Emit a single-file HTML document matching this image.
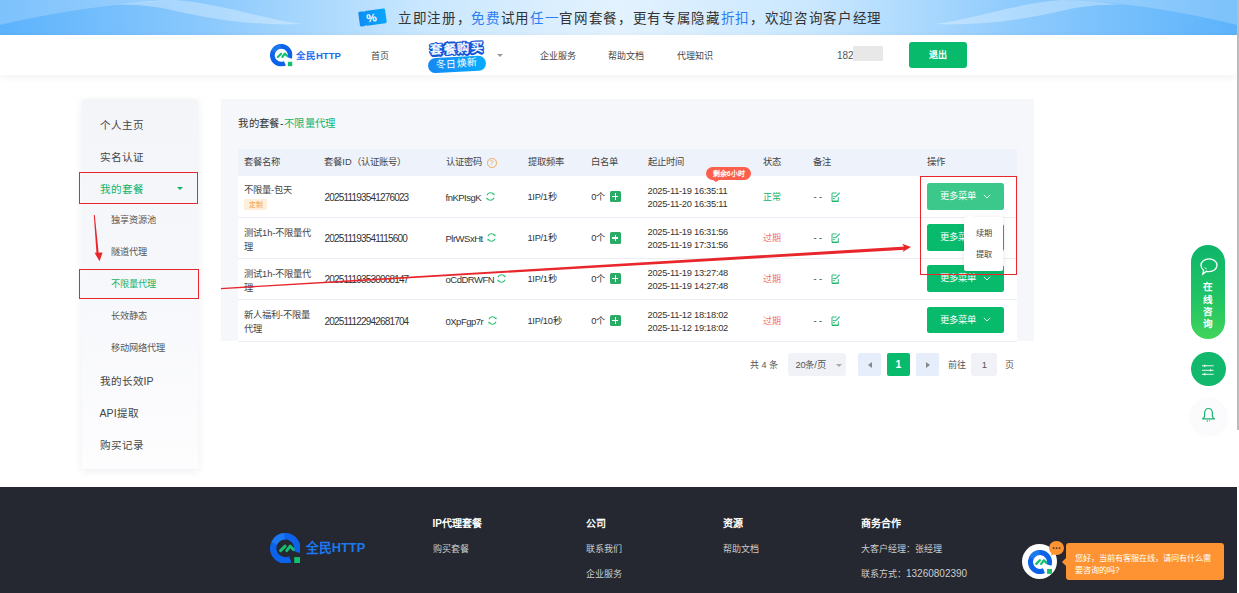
<!DOCTYPE html>
<html lang="zh-CN"><head><meta charset="utf-8">
<style>
*{margin:0;padding:0;box-sizing:border-box}
html,body{width:1239px;height:593px;overflow:hidden;background:#fff}
body{position:relative;font-family:"Liberation Sans",sans-serif;color:#333}
.a{position:absolute;white-space:nowrap;line-height:1}
#banner{left:0;top:0;width:1237px;height:35px;background:#c9e7fe;overflow:hidden}
#nav{left:0;top:35px;width:1237px;height:40px;background:#fff;box-shadow:0 2px 8px rgba(0,0,0,0.06)}
.side{left:82px;top:99px;width:116px;height:370px;background:linear-gradient(180deg,#f3f5f9 0%,#f6f7fb 45%,#fdfdfe 100%);box-shadow:0 2px 8px rgba(30,40,80,0.08)}
.card{left:221px;top:99px;width:813px;height:242px;background:#f6f7fb}
.redbox{position:absolute;border:1.9px solid #e8262b}
#footer{left:0;top:487px;width:1237px;height:106px;background:#252830}
#scroll{left:1237px;top:0;width:2px;height:430px;background:#bcbcbc}
</style></head><body>
<svg width="0" height="0" style="position:absolute"><defs><symbol id="logo" viewBox="0 0 30.5 30.5">
<path d="M20.25 26.22 A12.05 12.05 0 1 1 26.68 19.05" fill="none" stroke="#0d62ea" stroke-width="6.4"/>
<path d="M4.2 10.5 A12.05 12.05 0 0 1 14.5 3.2" fill="none" stroke="#2b8ef6" stroke-width="6.4" opacity="0.5"/>
<path d="M10.6 17.6 L15.1 13.1 M16.7 17.6 L20.2 13.1 L23.4 16.4" fill="none" stroke="#12c06e" stroke-width="2.9" stroke-linecap="round" stroke-linejoin="round"/>
<rect x="24.2" y="24.1" width="6.3" height="6.2" fill="#12c06e"/>
</symbol></defs></svg>

<!-- banner -->
<div id="banner" class="a">
<svg width="1237" height="35" style="position:absolute;left:0;top:0">
<defs><linearGradient id="bgr" x1="0" x2="1"><stop offset="0" stop-color="#5cb3fc"/><stop offset="0.18" stop-color="#8fcbfd"/><stop offset="0.34" stop-color="#c9e7fe"/><stop offset="0.5" stop-color="#e3f2fe"/><stop offset="0.66" stop-color="#c9e7fe"/><stop offset="0.82" stop-color="#8fcbfd"/><stop offset="1" stop-color="#5cb3fb"/></linearGradient></defs>
<rect width="1237" height="35" fill="url(#bgr)"/>
<path d="M0 0 H185 C150 1 80 6 0 25 Z" fill="#fff" opacity="0.2"/>
<path d="M175 0 C220 3 262 19 302 24 C262 26 215 20 180 12 C160 7 140 4 115 5 C135 2 155 0.5 175 0 Z" fill="#fff" opacity="0.3"/>
<path d="M1237 0 H1065 C1100 1 1160 6 1237 25 Z" fill="#fff" opacity="0.2"/>
<path d="M1062 0 C1017 3 975 19 935 24 C975 26 1022 20 1057 12 C1077 7 1097 4 1122 5 C1102 2 1082 0.5 1062 0 Z" fill="#fff" opacity="0.3"/>
</svg>
<svg class="a" style="left:355px;top:6px" width="35" height="23" viewBox="0 0 35 23"><defs><linearGradient id="bg1" x1="0" x2="1"><stop offset="0" stop-color="#0f8cf4"/><stop offset="1" stop-color="#06a8ff"/></linearGradient></defs><g transform="rotate(-8 17.5 11.5)"><path d="M4 5.5 Q4 4 5.5 4 H9 L10 5 L11 4 H29.5 Q31 4 31 5.5 V17.5 Q31 19 29.5 19 H11 L10 18 L9 19 H5.5 Q4 19 4 17.5 Z" fill="url(#bg1)"/>
<text x="16.5" y="15.8" font-family="Liberation Sans" font-weight="bold" font-size="11.5" fill="#fff" text-anchor="middle">%</text></g></svg>
<div class="a" id="btxt" style="left:398px;top:11.8px;font-size:13.5px;letter-spacing:1.66px;color:#333;font-weight:500">立即注册，<span style="color:#2a7df2">免费</span>试用<span style="color:#2a7df2">任一</span>官网套餐，更有专属隐藏<span style="color:#2a7df2">折扣</span>，欢迎咨询客户经理</div>
</div>

<!-- nav -->
<div id="nav" class="a">
<svg class="a" style="left:270px;top:9px" width="22.5" height="22.5"><use href="#logo"/></svg>
<div class="a" style="left:296px;top:16px;font-size:9.5px;font-weight:bold;color:#1a6cf0">全民HTTP</div>
<div class="a" style="left:371px;top:17px;font-size:9px;color:#444">首页</div>
<div class="a" style="left:427.5px;top:22px;width:57.5px;height:15px;border-radius:7.5px;background:linear-gradient(90deg,#1788f2,#06acff);transform:rotate(-3deg)"></div>
<div class="a" style="left:436px;top:24px;font-size:10px;color:#fff;transform:rotate(-3deg);letter-spacing:0.2px">冬日焕新</div>
<div class="a" style="left:430px;top:8.2px;font-size:12.5px;font-weight:bold;color:#eef6ff;text-shadow:1.3px 0px 0 #1356d8,-1.3px 0px 0 #1356d8,0px 1.3px 0 #1356d8,0px -1.3px 0 #1356d8,0.9px 0.9px 0 #1356d8,-0.9px -0.9px 0 #1356d8,0.9px -0.9px 0 #1356d8,-0.9px 0.9px 0 #1356d8,1.6px 0.6px 0 #1356d8,-1.6px 0.6px 0 #1356d8,0.6px 1.6px 0 #1356d8,-0.6px 1.6px 0 #1356d8,1.6px -0.6px 0 #1356d8,-1.6px -0.6px 0 #1356d8;transform:rotate(-3deg);letter-spacing:0.5px">套餐购买</div>
<div class="a" style="left:497px;top:18.5px;width:0;height:0;border-left:3.6px solid transparent;border-right:3.6px solid transparent;border-top:3.8px solid #999"></div>
<div class="a" style="left:539.5px;top:17px;font-size:9px;color:#444">企业服务</div>
<div class="a" style="left:607.5px;top:17px;font-size:9px;color:#444">帮助文档</div>
<div class="a" style="left:676.5px;top:17px;font-size:9px;color:#444">代理知识</div>
<div class="a" style="left:837px;top:15.8px;font-size:10px;color:#555">182</div>
<div class="a" style="left:853px;top:11px;width:30px;height:15px;background:#e8e8e8"></div>
<div class="a" style="left:909px;top:7px;width:58px;height:26px;border-radius:3px;background:#08ba6c"></div>
<div class="a" style="left:929px;top:16.3px;font-size:9px;color:#fff;font-weight:bold">退出</div>
</div>

<!-- sidebar -->
<div class="a side"></div>
<div class="a" style="left:99.5px;top:120.1px;font-size:10.6px;color:#444">个人主页</div>
<div class="a" style="left:99.5px;top:152.1px;font-size:10.6px;color:#444">实名认证</div>
<div class="a" style="left:99.5px;top:184.1px;font-size:10.6px;color:#12b36a">我的套餐</div>
<div class="a" style="left:176.7px;top:187px;width:0;height:0;border-left:3.6px solid transparent;border-right:3.6px solid transparent;border-top:3.8px solid #12b36a"></div>
<div class="a" style="left:111.0px;top:216.2px;font-size:9.2px;color:#555">独享资源池</div>
<div class="a" style="left:111.0px;top:248.2px;font-size:9.2px;color:#555">隧道代理</div>
<div class="a" style="left:111.0px;top:280.2px;font-size:9.2px;color:#12b36a">不限量代理</div>
<div class="a" style="left:111.0px;top:312.2px;font-size:9.2px;color:#555">长效静态</div>
<div class="a" style="left:111.0px;top:344.2px;font-size:9.2px;color:#555">移动网络代理</div>
<div class="a" style="left:99.5px;top:376.1px;font-size:10.6px;color:#444">我的长效IP</div>
<div class="a" style="left:99.5px;top:408.1px;font-size:10.6px;color:#444">API提取</div>
<div class="a" style="left:99.5px;top:440.1px;font-size:10.6px;color:#444">购买记录</div>
<div class="redbox" style="left:79.2px;top:172.2px;width:119px;height:31.6px"></div>
<div class="redbox" style="left:79.2px;top:269.2px;width:119.5px;height:30.3px"></div>
<svg class="a" style="left:0;top:0" width="240" height="300"><path d="M93.8 215 L94.8 215 L98.7 253.4 L96.5 253.6 Z" fill="#e8262b"/><path d="M94.6 252.8 L102.6 252.6 L99.5 261.2 Z" fill="#e8262b"/></svg>

<!-- main card -->
<div class="a card"></div>
<div class="a" style="left:238.3px;top:118.6px;font-size:10.4px;color:#333;letter-spacing:0.4px;">我的套餐-<span style="color:#12b36a">不限量代理</span></div>
<div class="a" style="left:238px;top:149px;width:779px;height:27px;background:#eef2fa"></div>
<div class="a" style="left:238px;top:176px;width:779px;height:165.4px;background:#fff"></div>
<div class="a" style="left:238px;top:217.0px;width:779px;height:1px;background:#ebeef5"></div>
<div class="a" style="left:238px;top:257.7px;width:779px;height:1px;background:#ebeef5"></div>
<div class="a" style="left:238px;top:298.8px;width:779px;height:1px;background:#ebeef5"></div>
<div class="a" style="left:238px;top:340.5px;width:779px;height:1px;background:#ebeef5"></div>
<div class="a" style="left:244px;top:158.2px;font-size:9.3px;color:#444;">套餐名称</div>
<div class="a" style="left:324.3px;top:158.2px;font-size:9.3px;color:#444;">套餐ID（认证账号）</div>
<div class="a" style="left:445.5px;top:158.2px;font-size:9.3px;color:#444;">认证密码</div>
<div class="a" style="left:527.5px;top:158.2px;font-size:9.3px;color:#444;">提取频率</div>
<div class="a" style="left:591.3px;top:158.2px;font-size:9.3px;color:#444;">白名单</div>
<div class="a" style="left:647.5px;top:158.2px;font-size:9.3px;color:#444;">起止时间</div>
<div class="a" style="left:762.9px;top:158.2px;font-size:9.3px;color:#444;">状态</div>
<div class="a" style="left:812.9px;top:157.5px;font-size:9.3px;color:#444;">备注</div>
<div class="a" style="left:927.3px;top:157.5px;font-size:9.3px;color:#444;">操作</div>
<div class="a" style="left:487px;top:158px;width:9.5px;height:9.5px;border:1px solid #f0a860;border-radius:50%;font-size:7px;color:#f0a860;text-align:center;line-height:7.5px">?</div>
<div class="a" style="left:244px;top:186.0px;font-size:9.3px;color:#444;">不限量-包天</div>
<div class="a" style="left:244.4px;top:198.7px;width:22.6px;height:11.5px;background:#fdefd9;border-radius:1px;font-size:6.8px;color:#f39a3a;line-height:11.5px;text-align:center">定制</div>
<div class="a" style="left:324.5px;top:193.0px;font-size:10px;color:#333;letter-spacing:-0.82px;">202511193541276023</div>
<div class="a" style="left:445.5px;top:193.0px;font-size:9.5px;color:#333;letter-spacing:-0.5px;">fnKPIsgK</div>
<svg class="a" style="left:485px;top:191.3px" width="11" height="11" viewBox="0 0 11 11"><path d="M2 4.2 A3.8 3.8 0 0 1 8.8 3.6 M9 6.8 A3.8 3.8 0 0 1 2.2 7.4" fill="none" stroke="#2fc07a" stroke-width="1.1"/><path d="M7.6 3.4 L9.4 4.4 L9.6 2.2 Z M3.4 7.6 L1.6 6.6 L1.4 8.8 Z" fill="#2fc07a"/></svg>
<div class="a" style="left:527.5px;top:193.0px;font-size:9.3px;color:#333;letter-spacing:-0.3px;">1IP/1秒</div>
<div class="a" style="left:591.3px;top:193.0px;font-size:9.3px;color:#333;letter-spacing:-0.3px;">0个</div>
<div class="a" style="left:609.5px;top:191.20000000000002px;width:11.3px;height:11.3px;background:#2aac67;border-radius:1.5px"><div class="a" style="left:2.3px;top:5.15px;width:6.7px;height:1.1px;background:#fff"></div><div class="a" style="left:5.1px;top:2.3px;width:1.1px;height:6.7px;background:#fff"></div></div>
<div class="a" style="left:647.5px;top:187.0px;font-size:9.3px;color:#333;letter-spacing:-0.27px;">2025-11-19 16:35:11</div>
<div class="a" style="left:647.5px;top:200.0px;font-size:9.3px;color:#333;letter-spacing:-0.27px;">2025-11-20 16:35:11</div>
<div class="a" style="left:762.9px;top:193.0px;font-size:9px;color:#12b36a;">正常</div>
<div class="a" style="left:813.4px;top:1px;margin-top:192.3px;font-size:9.3px;color:#333;">- -</div>
<svg class="a" style="left:830.8px;top:192.2px" width="10" height="10" viewBox="0 0 10 10"><path d="M5.6 1 H1 V9.4 H7.3 V5.2" fill="none" stroke="#28b872" stroke-width="0.95"/><path d="M4.2 5.1 L8.7 0.7" stroke="#3cc0a0" stroke-width="1.2"/><path d="M1.8 4.6 H4.5 M1.8 6.6 H3.9" stroke="#28b872" stroke-width="0.9"/><path d="M1 9.2 H7.3" stroke="#18b464" stroke-width="1.2"/></svg>
<div class="a" style="left:927.3px;top:183.3px;width:76.5px;height:26.6px;background:#3cc88a;border-radius:2.5px"></div>
<div class="a" style="left:940px;top:192.3px;font-size:9.3px;color:#fff;">更多菜单</div>
<svg class="a" style="left:983px;top:193.8px" width="8" height="5" viewBox="0 0 8 5"><path d="M0.8 0.8 L4 4 L7.2 0.8" fill="none" stroke="#fff" stroke-width="0.9"/></svg>
<div class="a" style="left:244px;top:228.6px;font-size:9.3px;color:#444;">测试1h-不限量代</div>
<div class="a" style="left:244px;top:242.6px;font-size:9.3px;color:#444;">理</div>
<div class="a" style="left:324.5px;top:234.1px;font-size:10px;color:#333;letter-spacing:-0.82px;">202511193541115600</div>
<div class="a" style="left:445.5px;top:234.1px;font-size:9.5px;color:#333;letter-spacing:-0.5px;">PlrWSxHt</div>
<svg class="a" style="left:486px;top:232.4px" width="11" height="11" viewBox="0 0 11 11"><path d="M2 4.2 A3.8 3.8 0 0 1 8.8 3.6 M9 6.8 A3.8 3.8 0 0 1 2.2 7.4" fill="none" stroke="#2fc07a" stroke-width="1.1"/><path d="M7.6 3.4 L9.4 4.4 L9.6 2.2 Z M3.4 7.6 L1.6 6.6 L1.4 8.8 Z" fill="#2fc07a"/></svg>
<div class="a" style="left:527.5px;top:234.1px;font-size:9.3px;color:#333;letter-spacing:-0.3px;">1IP/1秒</div>
<div class="a" style="left:591.3px;top:234.1px;font-size:9.3px;color:#333;letter-spacing:-0.3px;">0个</div>
<div class="a" style="left:609.5px;top:232.3px;width:11.3px;height:11.3px;background:#2aac67;border-radius:1.5px"><div class="a" style="left:2.3px;top:5.15px;width:6.7px;height:1.1px;background:#fff"></div><div class="a" style="left:5.1px;top:2.3px;width:1.1px;height:6.7px;background:#fff"></div></div>
<div class="a" style="left:647.5px;top:228.1px;font-size:9.3px;color:#333;letter-spacing:-0.27px;">2025-11-19 16:31:56</div>
<div class="a" style="left:647.5px;top:241.1px;font-size:9.3px;color:#333;letter-spacing:-0.27px;">2025-11-19 17:31:56</div>
<div class="a" style="left:762.9px;top:234.1px;font-size:9px;color:#f56c6c;">过期</div>
<div class="a" style="left:813.4px;top:1px;margin-top:233.4px;font-size:9.3px;color:#333;">- -</div>
<svg class="a" style="left:830.8px;top:233.3px" width="10" height="10" viewBox="0 0 10 10"><path d="M5.6 1 H1 V9.4 H7.3 V5.2" fill="none" stroke="#28b872" stroke-width="0.95"/><path d="M4.2 5.1 L8.7 0.7" stroke="#3cc0a0" stroke-width="1.2"/><path d="M1.8 4.6 H4.5 M1.8 6.6 H3.9" stroke="#28b872" stroke-width="0.9"/><path d="M1 9.2 H7.3" stroke="#18b464" stroke-width="1.2"/></svg>
<div class="a" style="left:927.3px;top:224.4px;width:76.5px;height:26.6px;background:#08ba6c;border-radius:2.5px"></div>
<div class="a" style="left:940px;top:233.4px;font-size:9.3px;color:#fff;">更多菜单</div>
<svg class="a" style="left:983px;top:234.9px" width="8" height="5" viewBox="0 0 8 5"><path d="M0.8 0.8 L4 4 L7.2 0.8" fill="none" stroke="#fff" stroke-width="0.9"/></svg>
<div class="a" style="left:244px;top:269.5px;font-size:9.3px;color:#444;">测试1h-不限量代</div>
<div class="a" style="left:244px;top:283.5px;font-size:9.3px;color:#444;">理</div>
<div class="a" style="left:324.5px;top:275.0px;font-size:10px;color:#333;letter-spacing:-0.82px;">202511193530068147</div>
<div class="a" style="left:445.5px;top:275.0px;font-size:9.5px;color:#333;letter-spacing:-0.5px;">oCdDRWFN</div>
<svg class="a" style="left:496px;top:273.3px" width="11" height="11" viewBox="0 0 11 11"><path d="M2 4.2 A3.8 3.8 0 0 1 8.8 3.6 M9 6.8 A3.8 3.8 0 0 1 2.2 7.4" fill="none" stroke="#2fc07a" stroke-width="1.1"/><path d="M7.6 3.4 L9.4 4.4 L9.6 2.2 Z M3.4 7.6 L1.6 6.6 L1.4 8.8 Z" fill="#2fc07a"/></svg>
<div class="a" style="left:527.5px;top:275.0px;font-size:9.3px;color:#333;letter-spacing:-0.3px;">1IP/1秒</div>
<div class="a" style="left:591.3px;top:275.0px;font-size:9.3px;color:#333;letter-spacing:-0.3px;">0个</div>
<div class="a" style="left:609.5px;top:273.2px;width:11.3px;height:11.3px;background:#2aac67;border-radius:1.5px"><div class="a" style="left:2.3px;top:5.15px;width:6.7px;height:1.1px;background:#fff"></div><div class="a" style="left:5.1px;top:2.3px;width:1.1px;height:6.7px;background:#fff"></div></div>
<div class="a" style="left:647.5px;top:269.0px;font-size:9.3px;color:#333;letter-spacing:-0.27px;">2025-11-19 13:27:48</div>
<div class="a" style="left:647.5px;top:282.0px;font-size:9.3px;color:#333;letter-spacing:-0.27px;">2025-11-19 14:27:48</div>
<div class="a" style="left:762.9px;top:275.0px;font-size:9px;color:#f56c6c;">过期</div>
<div class="a" style="left:813.4px;top:1px;margin-top:274.3px;font-size:9.3px;color:#333;">- -</div>
<svg class="a" style="left:830.8px;top:274.2px" width="10" height="10" viewBox="0 0 10 10"><path d="M5.6 1 H1 V9.4 H7.3 V5.2" fill="none" stroke="#28b872" stroke-width="0.95"/><path d="M4.2 5.1 L8.7 0.7" stroke="#3cc0a0" stroke-width="1.2"/><path d="M1.8 4.6 H4.5 M1.8 6.6 H3.9" stroke="#28b872" stroke-width="0.9"/><path d="M1 9.2 H7.3" stroke="#18b464" stroke-width="1.2"/></svg>
<div class="a" style="left:927.3px;top:265.3px;width:76.5px;height:26.6px;background:#08ba6c;border-radius:2.5px"></div>
<div class="a" style="left:940px;top:274.3px;font-size:9.3px;color:#fff;">更多菜单</div>
<svg class="a" style="left:983px;top:275.8px" width="8" height="5" viewBox="0 0 8 5"><path d="M0.8 0.8 L4 4 L7.2 0.8" fill="none" stroke="#fff" stroke-width="0.9"/></svg>
<div class="a" style="left:244px;top:311.0px;font-size:9.3px;color:#444;">新人福利-不限量</div>
<div class="a" style="left:244px;top:325.0px;font-size:9.3px;color:#444;">代理</div>
<div class="a" style="left:324.5px;top:316.5px;font-size:10px;color:#333;letter-spacing:-0.82px;">202511122942681704</div>
<div class="a" style="left:445.5px;top:316.5px;font-size:9.5px;color:#333;letter-spacing:-0.5px;">0XpFgp7r</div>
<svg class="a" style="left:487px;top:314.8px" width="11" height="11" viewBox="0 0 11 11"><path d="M2 4.2 A3.8 3.8 0 0 1 8.8 3.6 M9 6.8 A3.8 3.8 0 0 1 2.2 7.4" fill="none" stroke="#2fc07a" stroke-width="1.1"/><path d="M7.6 3.4 L9.4 4.4 L9.6 2.2 Z M3.4 7.6 L1.6 6.6 L1.4 8.8 Z" fill="#2fc07a"/></svg>
<div class="a" style="left:527.5px;top:316.5px;font-size:9.3px;color:#333;letter-spacing:-0.3px;">1IP/10秒</div>
<div class="a" style="left:591.3px;top:316.5px;font-size:9.3px;color:#333;letter-spacing:-0.3px;">0个</div>
<div class="a" style="left:609.5px;top:314.7px;width:11.3px;height:11.3px;background:#2aac67;border-radius:1.5px"><div class="a" style="left:2.3px;top:5.15px;width:6.7px;height:1.1px;background:#fff"></div><div class="a" style="left:5.1px;top:2.3px;width:1.1px;height:6.7px;background:#fff"></div></div>
<div class="a" style="left:647.5px;top:310.5px;font-size:9.3px;color:#333;letter-spacing:-0.27px;">2025-11-12 18:18:02</div>
<div class="a" style="left:647.5px;top:323.5px;font-size:9.3px;color:#333;letter-spacing:-0.27px;">2025-11-12 19:18:02</div>
<div class="a" style="left:762.9px;top:316.5px;font-size:9px;color:#f56c6c;">过期</div>
<div class="a" style="left:813.4px;top:1px;margin-top:315.8px;font-size:9.3px;color:#333;">- -</div>
<svg class="a" style="left:830.8px;top:315.7px" width="10" height="10" viewBox="0 0 10 10"><path d="M5.6 1 H1 V9.4 H7.3 V5.2" fill="none" stroke="#28b872" stroke-width="0.95"/><path d="M4.2 5.1 L8.7 0.7" stroke="#3cc0a0" stroke-width="1.2"/><path d="M1.8 4.6 H4.5 M1.8 6.6 H3.9" stroke="#28b872" stroke-width="0.9"/><path d="M1 9.2 H7.3" stroke="#18b464" stroke-width="1.2"/></svg>
<div class="a" style="left:927.3px;top:306.8px;width:76.5px;height:26.6px;background:#08ba6c;border-radius:2.5px"></div>
<div class="a" style="left:940px;top:315.8px;font-size:9.3px;color:#fff;">更多菜单</div>
<svg class="a" style="left:983px;top:317.3px" width="8" height="5" viewBox="0 0 8 5"><path d="M0.8 0.8 L4 4 L7.2 0.8" fill="none" stroke="#fff" stroke-width="0.9"/></svg>
<div class="a" style="left:706.4px;top:166.5px;width:44.5px;height:13.3px;background:#fd5f4c;border-radius:6.6px;font-size:7px;font-weight:bold;color:#fff;line-height:13.3px;text-align:center">剩余6小时</div>
<div class="a" style="left:713px;top:179.5px;width:0;height:0;border-left:3px solid transparent;border-right:3px solid transparent;border-top:2.8px solid #fd5f4c"></div>



<!-- popup -->
<div class="a" style="left:964px;top:217px;width:39px;height:53.6px;background:#fff;border-radius:2px;box-shadow:0 1px 6px rgba(0,0,0,0.10)"></div>
<div class="a" style="left:968px;top:214.4px;width:0;height:0;border-left:3px solid transparent;border-right:3px solid transparent;border-bottom:3px solid #fff"></div>
<div class="a" style="left:976px;top:229.8px;font-size:8.2px;color:#444">续期</div>
<div class="a" style="left:976px;top:251.3px;font-size:8.2px;color:#444">提取</div>
<div class="redbox" style="left:919.9px;top:175.9px;width:97.1px;height:99px"></div>
<!-- long arrow -->
<svg class="a" style="left:0;top:0" width="1239" height="593">
<path d="M221 289.25 L905.5 249.75 L905.3 246.45 L221 288.0 Z" fill="#e8262b"/>
<path d="M902.2 243.8 L911 247.1 L902.6 251.9 L904.6 247.8 Z" fill="#e8262b"/>
</svg>
<!-- pagination -->
<div class="a" style="left:750px;top:360.5px;font-size:9px;color:#555">共 4 条</div>
<div class="a" style="left:788px;top:353.2px;width:57.8px;height:23px;background:#f0f2f8;border-radius:3px"></div>
<div class="a" style="left:795.5px;top:360.5px;font-size:9.3px;color:#555;letter-spacing:-0.2px">20条/页</div>
<div class="a" style="left:836.4px;top:364px;width:0;height:0;border-left:3px solid transparent;border-right:3px solid transparent;border-top:3px solid #a8a8a8"></div>
<div class="a" style="left:857.5px;top:353.2px;width:23.5px;height:23px;background:#e6eefb;border-radius:2px"></div>
<div class="a" style="left:867.6px;top:361.5px;width:0;height:0;border-top:3.5px solid transparent;border-bottom:3.5px solid transparent;border-right:4.2px solid #888"></div>
<div class="a" style="left:886.8px;top:353.2px;width:23.4px;height:23px;background:#08ba6c;border-radius:2px;color:#fff;font-size:10.5px;font-weight:bold;text-align:center;line-height:23px">1</div>
<div class="a" style="left:915.8px;top:353.2px;width:23.2px;height:23px;background:#e6eefb;border-radius:2px"></div>
<div class="a" style="left:926px;top:361.5px;width:0;height:0;border-top:3.5px solid transparent;border-bottom:3.5px solid transparent;border-left:4.2px solid #888"></div>
<div class="a" style="left:948px;top:360.5px;font-size:9px;color:#555">前往</div>
<div class="a" style="left:971.3px;top:353.2px;width:26.2px;height:23px;background:#f0f2f8;border-radius:3px;color:#555;font-size:9.5px;text-align:center;line-height:23px">1</div>
<div class="a" style="left:1005px;top:360.5px;font-size:9px;color:#555">页</div>
<!-- floating -->
<div class="a" style="left:1191.2px;top:245px;width:33.6px;height:94px;border-radius:17px;background:linear-gradient(180deg,#0db56b 0%,#22c563 60%,#42d45a 100%)"></div>
<svg class="a" style="left:1199px;top:257px" width="20" height="19" viewBox="0 0 20 19"><path d="M10 1.8 C14.6 1.8 18 4.6 18 8.2 C18 11.8 14.6 14.6 10 14.6 C9.1 14.6 8.2 14.5 7.4 14.3 L3.8 17.2 L4.6 13.2 C2.9 12 2 10.2 2 8.2 C2 4.6 5.4 1.8 10 1.8 Z" fill="none" stroke="#fff" stroke-width="1.3"/><path d="M5.6 10.6 L7.6 12" stroke="#fff" stroke-width="1"/></svg>
<div class="a" style="left:1203.3px;top:281.3px;font-size:9.6px;font-weight:bold;color:#fff;line-height:12.35px;white-space:normal;width:10px">在线咨询</div>
<div class="a" style="left:1191.2px;top:352px;width:34.4px;height:34px;border-radius:50%;background:#12b96c"></div>
<svg class="a" style="left:1200px;top:361px" width="17" height="17" viewBox="0 0 17 17"><path d="M2 4.8 H13.6 M2 9.3 H13.6 M2 13.3 H13.6" stroke="#fff" stroke-width="0.9"/><path d="M3.5 4.8 L5.3 3.3 L5.3 6.3 Z M11.8 9.3 L10 7.8 L10 10.8 Z M3.5 13.3 L5.3 11.8 L5.3 14.8 Z" fill="#fff"/></svg>
<div class="a" style="left:1191.2px;top:400px;width:34.4px;height:34px;border-radius:50%;background:#fbfbfd;box-shadow:0 0 4px rgba(0,0,0,0.06)"></div>
<svg class="a" style="left:1200px;top:406px" width="17" height="19" viewBox="0 0 17 19"><path d="M8.5 2.5 C5.8 2.5 4.6 4.8 4.6 7.5 V10 C4.6 11.2 3.6 12.2 2.6 12.8 H14.4 C13.4 12.2 12.4 11.2 12.4 10 V7.5 C12.4 4.8 11.2 2.5 8.5 2.5 Z" fill="none" stroke="#18b46c" stroke-width="1.2" stroke-linejoin="round"/><path d="M7.2 14.2 V16 M9.6 14.2 V15.2" stroke="#18b46c" stroke-width="0.9"/></svg>

<!-- footer -->
<div id="footer" class="a">
<svg class="a" style="left:269.8px;top:45.8px" width="30.5" height="30.5"><use href="#logo"/></svg>
<div class="a" style="left:305.8px;top:54.8px;font-size:12.8px;font-weight:bold;color:#1a78f0">全民HTTP</div>
<div class="a" style="left:432.5px;top:32.3px;font-size:10px;font-weight:bold;color:#fff">IP代理套餐</div>
<div class="a" style="left:432.5px;top:58px;font-size:9px;color:#ccc">购买套餐</div>
<div class="a" style="left:585.6px;top:31.5px;font-size:10px;font-weight:bold;color:#fff">公司</div>
<div class="a" style="left:585.6px;top:57.5px;font-size:9px;color:#ccc">联系我们</div>
<div class="a" style="left:585.6px;top:83px;font-size:9px;color:#ccc">企业服务</div>
<div class="a" style="left:723.4px;top:31.5px;font-size:10px;font-weight:bold;color:#fff">资源</div>
<div class="a" style="left:723.4px;top:57.5px;font-size:9px;color:#ccc">帮助文档</div>
<div class="a" style="left:861px;top:31.5px;font-size:10px;font-weight:bold;color:#fff">商务合作</div>
<div class="a" style="left:861px;top:57.5px;font-size:9px;color:#ccc">大客户经理：张经理</div>
<div class="a" style="left:861px;top:81.5px;font-size:9px;color:#ccc">联系方式：<span style="font-size:10px">13260802390</span></div>
<!-- chat -->
<div class="a" style="left:1022px;top:56.8px;width:35px;height:35px;border-radius:50%;background:#fff"></div>
<svg class="a" style="left:1027.5px;top:62.5px" width="24" height="24"><use href="#logo"/></svg>
<div class="a" style="left:1049px;top:54px;width:14.8px;height:14px;border-radius:50%;background:#fd9332"></div>
<svg class="a" style="left:1049px;top:54px" width="15" height="16" viewBox="0 0 15 16"><path d="M3 11 L1.8 14.8 L6 12.5 Z" fill="#fd9332"/><circle cx="4.6" cy="7.1" r="0.95" fill="#3a3530"/><circle cx="7.6" cy="7.1" r="0.95" fill="#3a3530"/><circle cx="10.6" cy="7.1" r="0.95" fill="#3a3530"/></svg>
<div class="a" style="left:1066px;top:56px;width:158.2px;height:37.2px;border-radius:3px;background:#fd9332"></div>
<div class="a" style="left:1062px;top:71px;width:0;height:0;border-top:4px solid transparent;border-bottom:4px solid transparent;border-right:4px solid #fd9332"></div>
<div class="a" style="left:1075px;top:66px;font-size:8.2px;color:#fff;line-height:12.2px">您好，当前有客服在线，请问有什么需<br>要咨询的吗?</div>
</div>

<div id="scroll" class="a"></div>
</body></html>
